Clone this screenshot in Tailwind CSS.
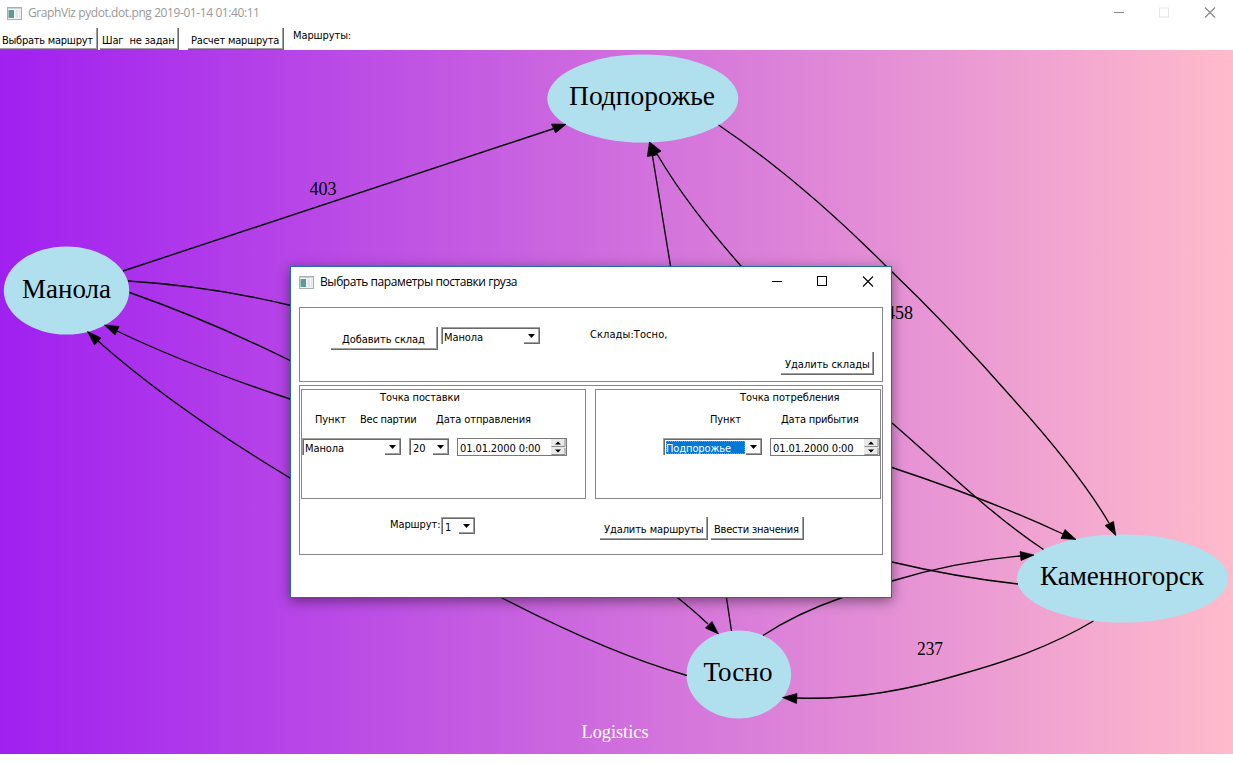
<!DOCTYPE html>
<html lang="ru">
<head>
<meta charset="utf-8">
<title>GraphViz pydot.dot.png</title>
<script src="https://cdn.jsdelivr.net/npm/@tailwindcss/browser@4"></script>
</head>
<body class="relative flex h-[763px] w-[1233px] flex-col overflow-hidden bg-white font-['DejaVu_Sans_Condensed','DejaVu_Sans',sans-serif] text-[11px] leading-[14px] tracking-[-0.1px] whitespace-nowrap text-black [font-stretch:condensed]">

<header class="flex h-[26px] shrink-0 items-center pl-[7px] font-['Open_Sans',sans-serif] text-[12px] text-[#999] [font-stretch:normal]">
  <svg class="mr-[6px] shrink-0" width="15" height="13" viewBox="0 0 15 13"><rect x=".5" y=".5" width="14" height="12" fill="#f4f6f7" stroke="#a9b0b4"/><path d="M1 1.5h13" stroke="#c9d0d4"/><rect x="1.5" y="3" width="5.500" height="8" fill="#5c9a96"/><rect x="8.500" y="3" width="2.500" height="8" fill="#e0e5e8"/><rect x="12" y="3" width="1.500" height="8" fill="#e0e5e8"/></svg>
  <span class="w-[233px] shrink-0 tracking-[-0.41px]">GraphViz pydot.dot.png 2019-01-14 01:40:11</span>
  <svg class="mr-[17px] ml-auto" width="103" height="12" viewBox="0 0 103 12" fill="none"><path d="M1 5.500h10" stroke="#888"/><rect x="46.500" y="1" width="9" height="9" stroke="#e4e4e4"/><path d="M92 .5l10 10M102 .5l-10 10" stroke="#888" stroke-width="1.200"/></svg>
</header>
<nav class="flex h-[24px] shrink-0">
  <div class="mt-[2px] flex h-[22px] w-[98px] items-center border-r border-b border-[#696969] pt-[5px] pl-[2px] tracking-[-0.25px] shadow-[inset_-1px_-1px_0_#a0a0a0]">Выбрать маршрут</div>
  <div class="mt-[2px] ml-[2px] flex h-[22px] w-[79px] items-center border-r border-b border-[#696969] pt-[5px] pl-[2px] tracking-[-0.15px] shadow-[inset_-1px_-1px_0_#a0a0a0]">Шаг&nbsp; не задан</div>
  <div class="mt-[2px] ml-[9px] flex h-[22px] w-[96px] items-center border-r border-b border-[#696969] pt-[5px] pl-[3px] tracking-[-0.2px] shadow-[inset_-1px_-1px_0_#a0a0a0]">Расчет маршрута</div>
  <div class="ml-[9px] pt-[3px]">Маршруты:</div>
</nav>

<main class="h-[704px] shrink-0 bg-linear-to-r/srgb from-[#a020f0] to-[#ffbbcb]">
  <svg class="block tracking-normal" width="1233" height="704" viewBox="0 50 1233 704" font-family="Liberation Serif, serif">
    <g fill="#b0e0ee">
      <ellipse cx="642.800" cy="98.500" rx="95.500" ry="44"/>
      <ellipse cx="66.500" cy="290.500" rx="62.700" ry="44"/>
      <ellipse cx="1122.600" cy="578.500" rx="105.600" ry="44"/>
      <ellipse cx="738.800" cy="674.500" rx="52.300" ry="44"/>
    </g>
    <g fill="none" stroke="#000" stroke-width="1.350">
      <path d="M123 271L554 128.500"/>
      <path d="M128 281Q210 286 291 305.500C560 356 800 436 892 467.500Q990 500 1063 534"/>
      <path d="M129.500 292.500Q208 320 290 360.500C480 452 590 525 678 598Q692 609 708 624"/>
      <path d="M1018 584Q955 577 892 562C640 510 480 458 290 399Q190 366 117 331"/>
      <path d="M687 675.500C625 658 560 628 502 598C430 562 350 516 290 478C222 437 152 389 98 341"/>
      <path d="M731.500 631L726.500 598L670.500 266L652.500 156"/>
      <path d="M1043.500 549.500C990 514 942 466 892 423C838 374 790 322 741 266C706 226 680 193 657 154"/>
      <path d="M718.500 125C775 163 830 210 886 266C932 310 972 352 1014 400C1050 440 1085 482 1109 523"/>
      <path d="M763 635.500C785 621 812 608 841 598L892 581C935 568 975 560 1020 556"/>
      <path d="M1093.500 621C1050 647 1005 662 960 674.500C905 691 850 700 797 698"/>
    </g>
    <g fill="#000" stroke="#000" stroke-width=".7">
      <path d="M566 124.300L551.500 124L555.500 133z"/>
      <path d="M1076 539.500L1065 529.500L1061 538.500z"/>
      <path d="M718.500 634L712 621.500L705.500 628z"/>
      <path d="M104.500 325L119 326.500L115 335z"/>
      <path d="M87.500 331.500L101 338L94.500 345z"/>
      <path d="M649.500 142L647.300 156.500L656.500 155z"/>
      <path d="M649.500 142L653 156L661 151z"/>
      <path d="M1115.800 535.500L1105 525.500L1113.500 521.500z"/>
      <path d="M1034 555L1020 551.500L1021 560.500z"/>
      <path d="M782.500 697.500L797 693.500L796.500 703.500z"/>
    </g>
    <g font-size="27">
      <text x="569" y="105" textLength="146" lengthAdjust="spacingAndGlyphs">Подпорожье</text>
      <text x="22" y="297.500" textLength="89" lengthAdjust="spacingAndGlyphs">Манола</text>
      <text x="1040" y="585" textLength="164" lengthAdjust="spacingAndGlyphs">Каменногорск</text>
      <text x="703.500" y="681" textLength="69" lengthAdjust="spacingAndGlyphs">Тосно</text>
    </g>
    <g font-size="18">
      <text x="309.500" y="195" textLength="27" lengthAdjust="spacingAndGlyphs">403</text>
      <text x="886" y="319" textLength="27" lengthAdjust="spacingAndGlyphs">458</text>
      <text x="917" y="655" textLength="26" lengthAdjust="spacingAndGlyphs">237</text>
      <text x="581.500" y="738" textLength="67" lengthAdjust="spacingAndGlyphs" fill="#fff">Logistics</text>
    </g>
  </svg>
</main>

<section class="absolute top-[266px] left-[290px] flex h-[332px] w-[602px] flex-col border border-[#1d6f9c] bg-white pr-[8px] pl-[8px] shadow-[0_3px_12px_rgba(0,0,0,0.45)]">
  <div class="flex h-[30px] shrink-0 items-center font-['Open_Sans',sans-serif] text-[12px] [font-stretch:normal]">
    <svg class="mr-[6px] shrink-0" width="15" height="13" viewBox="0 0 15 13"><rect x=".5" y=".5" width="14" height="12" fill="#f4f6f7" stroke="#a9b0b4"/><path d="M1 1.5h13" stroke="#c9d0d4"/><rect x="1.500" y="3" width="5.500" height="8" fill="#5c9a96"/><rect x="8.500" y="3" width="2.500" height="8" fill="#e0e5e8"/><rect x="12" y="3" width="1.500" height="8" fill="#e0e5e8"/></svg>
    <span class="w-[200px] shrink-0 tracking-[-0.42px]">Выбрать параметры поставки груза</span>
    <svg class="mr-[9px] ml-auto" width="103" height="12" viewBox="0 0 103 12" fill="none"><path d="M1 5.500h10" stroke="#000"/><rect x="46.500" y=".5" width="9" height="9" stroke="#000"/><path d="M92 .5l10 10M102 .5l-10 10" stroke="#000" stroke-width="1.100"/></svg>
  </div>

  <div class="mt-[10px] flex h-[75px] shrink-0 border border-[#868686]">
    <div class="mt-[19px] ml-[31px] flex h-[23px] w-[107px] shrink-0 items-center border-r border-b border-[#696969] pt-[4px] pl-[11px] tracking-[-0.05px] shadow-[inset_-1px_-1px_0_#a0a0a0]">Добавить склад</div>
    <div class="mt-[19px] ml-[3px] flex h-[17px] w-[99px] shrink-0 border-t border-l border-[#a0a0a0] pl-[2px] shadow-[inset_1px_1px_0_#696969]">
      <span class="mt-[3px]">Манола</span>
      <div class="mt-[1px] ml-auto flex h-[15px] w-[16px] items-center justify-center border-r border-b border-[#696969] shadow-[inset_-1px_-1px_0_#a0a0a0]"><svg width="7" height="4"><path d="M0 0h7L3.500 4z"/></svg></div>
    </div>
    <div class="mt-[20px] ml-[50px] tracking-[0.08px]">Склады:Тосно,</div>
    <div class="mt-[44px] mr-[8px] ml-auto flex h-[23px] w-[93px] shrink-0 items-center border-r border-b border-[#696969] pt-[4px] pl-[4px] tracking-normal shadow-[inset_-1px_-1px_0_#a0a0a0]">Удалить склады</div>
  </div>

  <div class="mt-[3px] flex h-[170px] shrink-0 flex-col border border-[#868686] px-[1px] pt-[3px]">
    <div class="flex justify-between">
      <div class="flex h-[110px] w-[285px] flex-col border border-[#868686]">
        <div class="mt-px pl-[78px]">Точка поставки</div>
        <div class="mt-[8px] flex pl-[13px]"><span class="w-[45px]">Пункт</span><span class="w-[76px] tracking-[-0.25px]">Вес партии</span><span>Дата отправления</span></div>
        <div class="mt-[11px] flex">
          <div class="flex h-[17px] w-[99px] border-t border-l border-[#a0a0a0] pl-[2px] shadow-[inset_1px_1px_0_#696969]">
            <span class="mt-[3px]">Манола</span>
            <div class="mt-[1px] ml-auto flex h-[15px] w-[16px] items-center justify-center border-r border-b border-[#696969] shadow-[inset_-1px_-1px_0_#a0a0a0]"><svg width="7" height="4"><path d="M0 0h7L3.500 4z"/></svg></div>
          </div>
          <div class="ml-[8px] flex h-[17px] w-[40px] border-t border-l border-[#a0a0a0] pl-[3px] shadow-[inset_1px_1px_0_#696969]">
            <span class="mt-[3px]">20</span>
            <div class="mt-[1px] ml-auto flex h-[15px] w-[16px] items-center justify-center border-r border-b border-[#696969] shadow-[inset_-1px_-1px_0_#a0a0a0]"><svg width="7" height="4"><path d="M0 0h7L3.500 4z"/></svg></div>
          </div>
          <div class="ml-[8px] flex h-[18px] w-[110px] border border-[#7a7a7a] pl-[2px]">
            <span class="mt-[3px]">01.01.2000 0:00</span>
            <svg class="ml-auto" width="15" height="16"><rect x="0" y="0" width="15" height="16" fill="#e9e9e9"/><path d="M.5 7.500h13.500V0M.5 15.500h13.500V9" fill="none" stroke="#8e8e8e"/><path d="M4 5.500h6L7 2.500zM4 10.500h6L7 13.500z"/></svg>
          </div>
        </div>
      </div>
      <div class="flex h-[110px] w-[286px] flex-col border border-[#868686]">
        <div class="mt-px pl-[144px]">Точка потребления</div>
        <div class="mt-[8px] flex pl-[114px]"><span class="w-[71px]">Пункт</span><span class="tracking-[-0.2px]">Дата прибытия</span></div>
        <div class="mt-[11px] flex justify-end">
          <div class="flex h-[17px] w-[99px] border-t border-l border-[#a0a0a0] pl-[2px] shadow-[inset_1px_1px_0_#696969]">
            <span class="mt-[2px] h-[13px] w-[79px] bg-[#0078d7] pt-px text-white outline-1 -outline-offset-1 outline-dotted outline-[#e9863a]">Подпорожье</span>
            <div class="mt-[1px] ml-auto flex h-[15px] w-[16px] items-center justify-center border-r border-b border-[#696969] shadow-[inset_-1px_-1px_0_#a0a0a0]"><svg width="7" height="4"><path d="M0 0h7L3.500 4z"/></svg></div>
          </div>
          <div class="ml-[8px] flex h-[18px] w-[110px] border border-[#7a7a7a] pl-[2px]">
            <span class="mt-[3px]">01.01.2000 0:00</span>
            <svg class="ml-auto" width="15" height="16"><rect x="0" y="0" width="15" height="16" fill="#e9e9e9"/><path d="M.5 7.500h13.500V0M.5 15.500h13.500V9" fill="none" stroke="#8e8e8e"/><path d="M4 5.500h6L7 2.500zM4 10.500h6L7 13.500z"/></svg>
          </div>
        </div>
      </div>
    </div>
    <div class="mt-[18px] flex pl-[89px]">
      <span class="mt-px w-[51px] tracking-[-0.1px]">Маршрут:</span>
      <div class="flex h-[17px] w-[34px] border-t border-l border-[#a0a0a0] pl-[3px] shadow-[inset_1px_1px_0_#696969]">
        <span class="mt-[3px]">1</span>
        <div class="mt-[1px] ml-auto flex h-[15px] w-[16px] items-center justify-center border-r border-b border-[#696969] shadow-[inset_-1px_-1px_0_#a0a0a0]"><svg width="7" height="4"><path d="M0 0h7L3.500 4z"/></svg></div>
      </div>
      <div class="ml-[125px] flex h-[23px] w-[108px] items-center border-r border-b border-[#696969] pt-[4px] pl-[4px] tracking-[-0.1px] shadow-[inset_-1px_-1px_0_#a0a0a0]">Удалить маршруты</div>
      <div class="ml-[3px] flex h-[23px] w-[93px] items-center border-r border-b border-[#696969] pt-[4px] pl-[3px] tracking-[-0.22px] shadow-[inset_-1px_-1px_0_#a0a0a0]">Ввести значения</div>
    </div>
  </div>
</section>
</body>
</html>
